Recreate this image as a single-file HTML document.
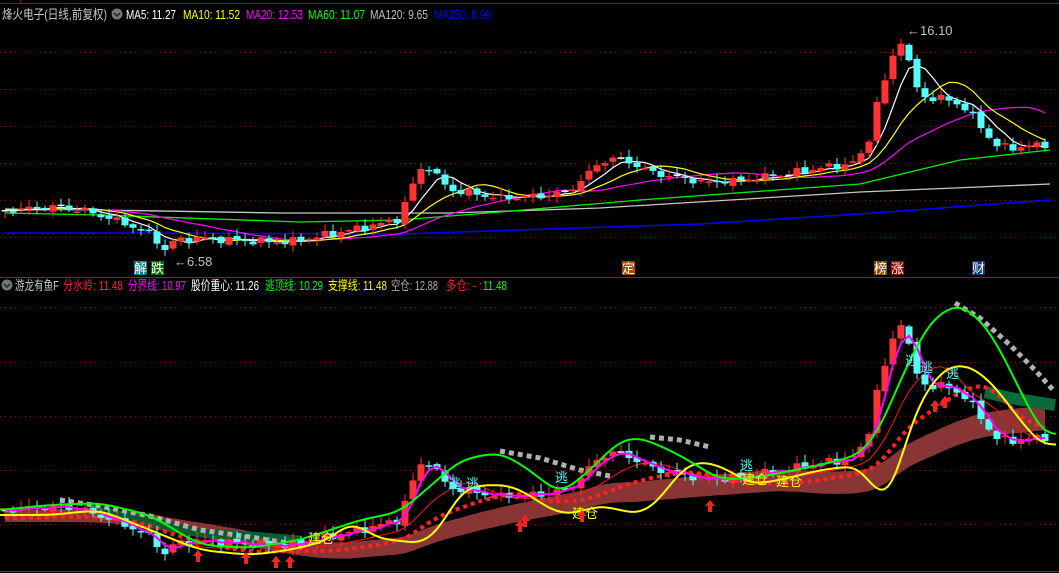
<!DOCTYPE html>
<html><head><meta charset="utf-8"><style>
html,body{margin:0;padding:0;background:#000;overflow:hidden}
svg{display:block}
text{font-family:"Liberation Sans","Noto Sans CJK SC",sans-serif;font-size:13px}
</style></head><body>
<svg id="s" width="1059" height="573" viewBox="0 0 1059 573" xmlns="http://www.w3.org/2000/svg">
<rect width="1059" height="573" fill="#000"/>
<line x1="0" y1="3.5" x2="1059" y2="3.5" stroke="#c00000"/>
<line x1="20.5" y1="0" x2="20.5" y2="3" stroke="#c00000"/>
<g stroke="#a00000" stroke-dasharray="1 4">
<line x1="0" y1="52.5" x2="1059" y2="52.5"/><line x1="0" y1="89.5" x2="1059" y2="89.5"/>
<line x1="0" y1="126.5" x2="1059" y2="126.5"/><line x1="0" y1="163.5" x2="1059" y2="163.5"/>
<line x1="0" y1="200.5" x2="1059" y2="200.5"/><line x1="0" y1="237.5" x2="1059" y2="237.5"/>
<line x1="0" y1="307.5" x2="1059" y2="307.5"/><line x1="0" y1="362.5" x2="1059" y2="362.5"/>
<line x1="0" y1="416.5" x2="1059" y2="416.5"/><line x1="0" y1="470.5" x2="1059" y2="470.5"/>
<line x1="0" y1="524.5" x2="1059" y2="524.5"/>
</g>
<line x1="0" y1="277.5" x2="1059" y2="277.5" stroke="#d00000"/>
<line x1="0" y1="571.5" x2="1059" y2="571.5" stroke="#d00000"/>
<g id="dyn"></g>
<text x="2" y="19" fill="#c8c8c8" font-size="14" textLength="105" lengthAdjust="spacingAndGlyphs">烽火电子(日线,前复权)</text>
<circle cx="117" cy="14" r="5.5" fill="#777"/><path d="M114 13l3 3 3-3" stroke="#222" fill="none" stroke-width="1.5"/>
<text x="126" y="19" fill="#fff" textLength="50" lengthAdjust="spacingAndGlyphs">MA5: 11.27</text>
<text x="183" y="19" fill="#ffff00" textLength="57" lengthAdjust="spacingAndGlyphs">MA10: 11.52</text>
<text x="246" y="19" fill="#ff00ff" textLength="57" lengthAdjust="spacingAndGlyphs">MA20: 12.53</text>
<text x="308" y="19" fill="#00ff00" textLength="57" lengthAdjust="spacingAndGlyphs">MA60: 11.07</text>
<text x="370" y="19" fill="#c0c0c0" textLength="58" lengthAdjust="spacingAndGlyphs">MA120: 9.65</text>
<text x="434" y="19" fill="#0000ff" textLength="57" lengthAdjust="spacingAndGlyphs">MA250: 8.99</text>
<circle cx="7" cy="285" r="5.5" fill="#777"/><path d="M4 284l3 3 3-3" stroke="#222" fill="none" stroke-width="1.5"/>
<text x="15" y="290" fill="#c8c8c8" font-size="14" textLength="44" lengthAdjust="spacingAndGlyphs">游龙有鱼F</text>
<text x="63" y="290" fill="#ff2020" textLength="60" lengthAdjust="spacingAndGlyphs">分水岭: 11.48</text>
<text x="128" y="290" fill="#ff00ff" textLength="58" lengthAdjust="spacingAndGlyphs">分界线: 10.97</text>
<text x="191" y="290" fill="#fff" textLength="68" lengthAdjust="spacingAndGlyphs">股价重心: 11.26</text>
<text x="265" y="290" fill="#00ff00" textLength="58" lengthAdjust="spacingAndGlyphs">逃顶线: 10.29</text>
<text x="328" y="290" fill="#ffff00" textLength="59" lengthAdjust="spacingAndGlyphs">支撑线: 11.48</text>
<text x="391" y="290" fill="#aaa" textLength="47" lengthAdjust="spacingAndGlyphs">空仓: 12.88</text>
<text x="446" y="290" fill="#ff2020" textLength="36" lengthAdjust="spacingAndGlyphs">多仓: - :</text><text x="483" y="290" fill="#00ff00" textLength="24" lengthAdjust="spacingAndGlyphs">11.48</text>
<rect x="134" y="261" width="13" height="14" fill="#008080"/><text x="134" y="273" fill="#fff">解</text>
<rect x="151" y="261" width="13" height="14" fill="#007000"/><text x="151" y="273" fill="#fff">跌</text>
<rect x="622" y="261" width="13" height="14" fill="#b04000"/><text x="622" y="273" fill="#fff">定</text>
<rect x="874" y="261" width="13" height="14" fill="#8a4a00"/><text x="874" y="273" fill="#fff">榜</text>
<rect x="891" y="261" width="13" height="14" fill="#900000"/><text x="891" y="273" fill="#fff">涨</text>
<rect x="972" y="261" width="13" height="14" fill="#103a70"/><text x="972" y="273" fill="#fff">财</text>
<text x="174" y="266" fill="#c0c0c0" font-size="14">←6.58</text>
<text x="907" y="35" fill="#c0c0c0" font-size="14">←16.10</text>
</svg>
<script>
const K=[[5,210],[60,207],[90,212],[130,225],[155,238],[165,250],[175,240],[200,238],[250,241],[290,242],[320,236],[380,224],[400,218],[410,190],[425,162],[440,180],[450,190],[470,193],[500,198],[540,196],[565,192],[580,182],[600,162],[615,158],[630,162],[650,172],[680,178],[710,183],[740,180],[780,175],[820,168],[850,164],[862,155],[870,135],[880,90],[890,72],[898,32],[906,52],[914,82],[922,97],[935,98],[950,100],[965,108],[980,125],[995,145],[1010,148],[1050,144]];
function ip(P,x){for(let i=1;i<P.length;i++){if(x<=P[i][0]){const a=P[i-1],b=P[i];return a[1]+(b[1]-a[1])*(x-a[0])/(b[0]-a[0]);}}return P[P.length-1][1];}
const N=131,X=[],C=[],O=[],H=[],L=[];
for(let i=0;i<N;i++){const x=5+i*8;X.push(x);C.push(ip(K,x)+Math.sin(i*1.7)*2.5+Math.sin(i*3.1)*1.8);}
for(let i=0;i<N;i++){O.push(i?C[i-1]+Math.sin(i*2.3)*1.5:C[0]+2);const r=Math.abs(Math.sin(i*5.7));H.push(Math.min(O[i],C[i])-r*6-1);L.push(Math.max(O[i],C[i])+Math.abs(Math.cos(i*4.1))*5+1);}
function ma(A,n){return A.map((v,i)=>{let s=0,c=0;for(let j=Math.max(0,i-n+1);j<=i;j++){s+=A[j];c++;}for(let k=c;k<n;k++){s+=A[0];}return s/n;});}
const B=y=>310+(y-30)*1.11;
let out='';
function pl(xs,ys,col,w,extra){return `<polyline fill="none" stroke="${col}" stroke-width="${w||1}" ${extra||''} points="${xs.map((x,i)=>x+','+ys[i].toFixed(1)).join(' ')}"/>`;}
function pk(P,col,w,extra){return `<polyline fill="none" stroke="${col}" stroke-width="${w||1}" ${extra||''} stroke-linejoin="round" points="${P.map(p=>p.join(',')).join(' ')}"/>`;}
function sm(P){const xs=[];for(let x=P[0][0];x<=P[P.length-1][0];x+=4)xs.push(x);let ys=xs.map(x=>ip(P,x));for(let k=0;k<3;k++)ys=ys.map((v,i)=>(ys[Math.max(0,i-2)]+ys[Math.max(0,i-1)]+v+ys[Math.min(ys.length-1,i+1)]+ys[Math.min(ys.length-1,i+2)])/5);return xs.map((x,i)=>[x,ys[i].toFixed(1)]);}
out+=pk([[5,233],[120,233],[400,234],[700,224],[860,214],[1050,200]],'#0000ff',1.5);
out+=pk([[5,209],[100,210],[280,213],[450,213],[600,208],[860,192],[1050,184]],'#c8c8c8',1.3);
out+=pk([[5,213],[100,215],[300,222],[400,220],[500,212],[640,200],[860,184],[960,160],[1050,150]],'#00ee00',1.3);
out+=pl(X,ma(C,20),'#ff00ff',1.2);
out+=pl(X,ma(C,10),'#ffff00',1.2);
out+=pl(X,ma(C,5),'#ffffff',1.2);
function candles(f){let s='';for(let i=0;i<N;i++){const up=C[i]<O[i];const col=up?'#ff3333':'#55ffff';const t=f(Math.min(O[i],C[i])),b=f(Math.max(O[i],C[i]));let h=Math.max(b-t,1.5);const x=X[i];
s+=`<line x1="${x}" y1="${f(H[i]).toFixed(1)}" x2="${x}" y2="${f(L[i]).toFixed(1)}" stroke="${col}"/>`;
if(h<2.5)s+=`<rect x="${x-3.5}" y="${t}" width="7" height="1.5" fill="${i%7==0?'#fff':col}"/>`;else s+=`<rect x="${x-3.5}" y="${t.toFixed(1)}" width="7" height="${h.toFixed(1)}" fill="${col}"/>`;}return s;}
out+=candles(y=>y);
const BC=C.map(B);
const band=ma(BC,25).map(v=>v+6);
let poly=X.map((x,i)=>x+','+(band[i]-6).toFixed(1)).join(' ')+' '+X.slice().reverse().map((x,j)=>{const i=N-1-j;return x+','+(band[i]+6+i*0.1).toFixed(1);}).join(' ');
out+=`<polygon points="${poly}" fill="#8a3535"/>`;
out+=pk([[985,392],[1010,398],[1055,405]],'#0a6a3a',12);
out+=pk([[90,508],[150,522],[200,533],[250,536],[300,540]],'#0b5a30',9);
const gd='stroke-dasharray="5 4"';
out+=pk([[60,500],[100,506],[150,516],[200,530],[250,537],[300,545]],'#b0b0b0',5,gd);
out+=pk([[500,451],[540,458],[580,470],[610,476]],'#b0b0b0',5,gd);
out+=pk([[650,437],[680,440],[710,447]],'#b0b0b0',5,gd);
out+=pk([[955,303],[980,318],[1010,345],[1035,370],[1055,392]],'#b0b0b0',5,gd);
out+=pl(X,ma(BC,8).map(v=>v+4),'#ff1010',1,'');
out+=pl(X,ma(BC,14).map(v=>v+8),'#ff2020',4,'stroke-dasharray="4 4"');
out+=candles(B);
out+=pl(X,ma(BC,3),'#ff00ff',2);
out+=pk(sm([[0,515],[50,515],[100,510],[150,530],[200,550],[250,555],[290,550],[330,540],[350,520],[380,540],[400,540],[420,545],[440,530],[460,490],[480,485],[510,485],[530,495],[550,510],[570,515],[600,505],[620,510],[640,515],[660,500],[680,470],[700,460],[730,470],[750,485],[780,480],[820,470],[860,465],[880,500],[895,490],[910,420],[940,370],[965,363],[990,380],[1020,420],[1045,450],[1059,440]]),'#ffff00',2);
out+=pk(sm([[0,510],[50,505],[100,503],[150,515],[200,545],[250,548],[300,540],[360,520],[400,512],[420,495],[460,460],[500,452],[530,470],[560,495],[590,470],[620,440],[640,437],[680,455],[720,480],[760,477],[820,465],[860,455],[880,430],[900,380],[930,320],[960,302],[990,330],[1020,390],[1045,440],[1059,430]]),'#00ff00',2);
[[448,488],[466,488],[555,482],[740,470],[920,372],[946,378],[905,365]].forEach(p=>out+=`<text x="${p[0]}" y="${p[1]}" fill="#55ffff" font-size="13">逃</text>`);
[[308,543],[572,518],[742,484],[776,486]].forEach(p=>out+=`<text x="${p[0]}" y="${p[1]}" fill="#ffff00" font-size="13">建仓</text>`);
[[198,550],[246,552],[276,556],[290,556],[520,520],[525,515],[582,510],[710,500],[935,400],[945,396]].forEach(p=>out+=`<path d="M${p[0]} ${p[1]}l-5 6h3v6h4v-6h3z" fill="#ff2020"/>`);
document.getElementById('dyn').innerHTML=out;
</script>
</body></html>
